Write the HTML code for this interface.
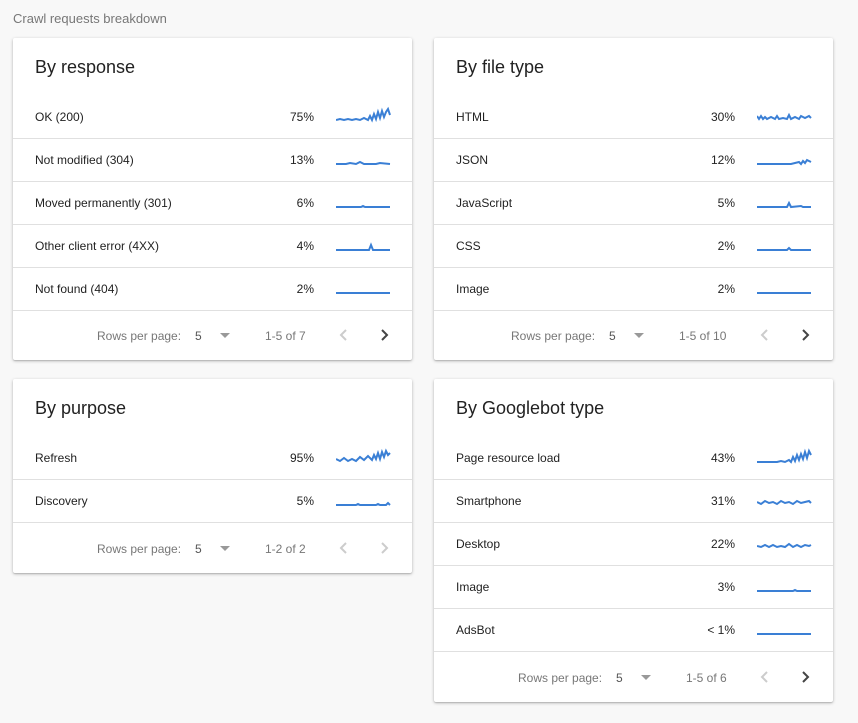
<!DOCTYPE html>
<html><head><meta charset="utf-8"><style>
body{margin:0;background:#f8f8f8;font-family:"Liberation Sans",Arial,sans-serif;width:858px;height:723px;position:relative;overflow:hidden}
.hdr{position:absolute;left:13px;top:11px;font-size:13px;color:#777}
.card{position:absolute;width:399px;background:#fff;box-shadow:0 1px 3px rgba(0,0,0,.25),0 1px 1px rgba(0,0,0,.12);border-radius:2px}
.t{position:absolute;left:22px;top:19px;font-size:18px;color:#222}
.row{position:absolute;left:0;width:399px;height:43px;border-bottom:1px solid #e0e0e0;font-size:12px;color:#222}
.row .l{position:absolute;left:22px;top:15px}
.row .p{position:absolute;right:98px;top:15px}
.row svg{position:absolute;left:323px;top:11px}
.ft{position:absolute;left:0;width:399px;height:50px;font-size:12px;color:#777}
.ft span{position:absolute;top:19px}
.ft svg{position:absolute;top:18px}
polyline{stroke-width:2}
</style></head><body>
<div class="hdr">Crawl requests breakdown</div>

<div class="card" style="left:13px;top:38px;height:322px">
<div class="t">By response</div>
<div class="row" style="top:57px"><span class="l">OK (200)</span><span class="p">75%</span><svg width="56" height="20"><polyline fill="none" stroke="#3a7fd5" points="0,14 4,13 8,14 12,13 16,14 20,13 24,14 28,12 32,14 34,10 36,14 38,8 40,13 42,6 44,12 46,5 48,11 50,6 52,3 54,9"/></svg></div>
<div class="row" style="top:100px"><span class="l">Not modified (304)</span><span class="p">13%</span><svg width="56" height="20"><polyline fill="none" stroke="#3a7fd5" points="0,15 10,15 14,14 20,15 24,13 28,15 40,15 44,14 54,15"/></svg></div>
<div class="row" style="top:143px"><span class="l">Moved permanently (301)</span><span class="p">6%</span><svg width="56" height="20"><polyline fill="none" stroke="#3a7fd5" points="0,15 25,15 27,14 29,15 54,15"/></svg></div>
<div class="row" style="top:186px"><span class="l">Other client error (4XX)</span><span class="p">4%</span><svg width="56" height="20"><polyline fill="none" stroke="#3a7fd5" points="0,15 33,15 35,10 37,15 54,15"/></svg></div>
<div class="row" style="top:229px"><span class="l">Not found (404)</span><span class="p">2%</span><svg width="56" height="20"><polyline fill="none" stroke="#3a7fd5" points="0,15 54,15"/></svg></div>
<div class="ft" style="top:272px"><span style="left:84px">Rows per page:</span><span style="left:182px;color:#555">5</span><span style="left:207px;top:23px;width:0;height:0;border-left:5px solid transparent;border-right:5px solid transparent;border-top:5px solid #999"></span><span style="left:252px">1-5 of 7</span><svg style="left:326px" width="10" height="14"><polyline points="7,2 2,7 7,12" fill="none" stroke="#ccc" stroke-width="1.6"/></svg><svg style="left:366px" width="10" height="14"><polyline points="3,2 8,7 3,12" fill="none" stroke="#444" stroke-width="1.6"/></svg></div>
</div>

<div class="card" style="left:434px;top:38px;height:322px">
<div class="t">By file type</div>
<div class="row" style="top:57px"><span class="l">HTML</span><span class="p">30%</span><svg width="56" height="20"><polyline fill="none" stroke="#3a7fd5" points="0,10 2,13 4,10 6,13 8,11 10,13 14,11 18,13 20,10 22,13 26,12 30,13 32,9 34,13 38,11 42,13 44,10 48,12 52,10 54,12"/></svg></div>
<div class="row" style="top:100px"><span class="l">JSON</span><span class="p">12%</span><svg width="56" height="20"><polyline fill="none" stroke="#3a7fd5" points="0,15 34,15 38,14 42,13 44,15 46,12 48,14 50,11 54,13"/></svg></div>
<div class="row" style="top:143px"><span class="l">JavaScript</span><span class="p">5%</span><svg width="56" height="20"><polyline fill="none" stroke="#3a7fd5" points="0,15 30,15 32,11 34,15 44,14 46,15 54,15"/></svg></div>
<div class="row" style="top:186px"><span class="l">CSS</span><span class="p">2%</span><svg width="56" height="20"><polyline fill="none" stroke="#3a7fd5" points="0,15 30,15 32,13 34,15 54,15"/></svg></div>
<div class="row" style="top:229px"><span class="l">Image</span><span class="p">2%</span><svg width="56" height="20"><polyline fill="none" stroke="#3a7fd5" points="0,15 54,15"/></svg></div>
<div class="ft" style="top:272px"><span style="left:77px">Rows per page:</span><span style="left:175px;color:#555">5</span><span style="left:200px;top:23px;width:0;height:0;border-left:5px solid transparent;border-right:5px solid transparent;border-top:5px solid #999"></span><span style="left:245px">1-5 of 10</span><svg style="left:326px" width="10" height="14"><polyline points="7,2 2,7 7,12" fill="none" stroke="#ccc" stroke-width="1.6"/></svg><svg style="left:366px" width="10" height="14"><polyline points="3,2 8,7 3,12" fill="none" stroke="#444" stroke-width="1.6"/></svg></div>
</div>

<div class="card" style="left:13px;top:379px;height:194px">
<div class="t">By purpose</div>
<div class="row" style="top:57px"><span class="l">Refresh</span><span class="p">95%</span><svg width="56" height="20"><polyline fill="none" stroke="#3a7fd5" points="0,12 4,14 8,11 12,14 16,12 20,14 24,10 28,13 32,9 36,13 38,8 40,12 42,6 44,12 46,5 48,10 50,4 52,8 54,6"/></svg></div>
<div class="row" style="top:100px"><span class="l">Discovery</span><span class="p">5%</span><svg width="56" height="20"><polyline fill="none" stroke="#3a7fd5" points="0,15 20,15 22,14 24,15 40,15 42,14 44,15 50,15 52,13 54,15"/></svg></div>
<div class="ft" style="top:144px"><span style="left:84px">Rows per page:</span><span style="left:182px;color:#555">5</span><span style="left:207px;top:23px;width:0;height:0;border-left:5px solid transparent;border-right:5px solid transparent;border-top:5px solid #999"></span><span style="left:252px">1-2 of 2</span><svg style="left:326px" width="10" height="14"><polyline points="7,2 2,7 7,12" fill="none" stroke="#ccc" stroke-width="1.6"/></svg><svg style="left:366px" width="10" height="14"><polyline points="3,2 8,7 3,12" fill="none" stroke="#ccc" stroke-width="1.6"/></svg></div>
</div>

<div class="card" style="left:434px;top:379px;height:323px">
<div class="t">By Googlebot type</div>
<div class="row" style="top:57px"><span class="l">Page resource load</span><span class="p">43%</span><svg width="56" height="20"><polyline fill="none" stroke="#3a7fd5" points="0,15 20,15 24,14 28,15 32,13 34,15 36,10 38,14 40,8 42,13 44,7 46,12 48,5 50,11 52,4 54,8"/></svg></div>
<div class="row" style="top:100px"><span class="l">Smartphone</span><span class="p">31%</span><svg width="56" height="20"><polyline fill="none" stroke="#3a7fd5" points="0,12 4,14 8,11 12,13 16,12 20,14 24,11 28,13 32,12 36,14 40,11 44,13 48,12 52,11 54,13"/></svg></div>
<div class="row" style="top:143px"><span class="l">Desktop</span><span class="p">22%</span><svg width="56" height="20"><polyline fill="none" stroke="#3a7fd5" points="0,13 4,14 8,12 12,14 16,12 20,14 24,13 28,14 32,11 36,14 40,12 44,14 48,12 52,13 54,12"/></svg></div>
<div class="row" style="top:186px"><span class="l">Image</span><span class="p">3%</span><svg width="56" height="20"><polyline fill="none" stroke="#3a7fd5" points="0,15 36,15 38,14 40,15 54,15"/></svg></div>
<div class="row" style="top:229px"><span class="l">AdsBot</span><span class="p">&lt; 1%</span><svg width="56" height="20"><polyline fill="none" stroke="#3a7fd5" points="0,15 54,15"/></svg></div>
<div class="ft" style="top:273px"><span style="left:84px">Rows per page:</span><span style="left:182px;color:#555">5</span><span style="left:207px;top:23px;width:0;height:0;border-left:5px solid transparent;border-right:5px solid transparent;border-top:5px solid #999"></span><span style="left:252px">1-5 of 6</span><svg style="left:326px" width="10" height="14"><polyline points="7,2 2,7 7,12" fill="none" stroke="#ccc" stroke-width="1.6"/></svg><svg style="left:366px" width="10" height="14"><polyline points="3,2 8,7 3,12" fill="none" stroke="#444" stroke-width="1.6"/></svg></div>
</div>
</body></html>
